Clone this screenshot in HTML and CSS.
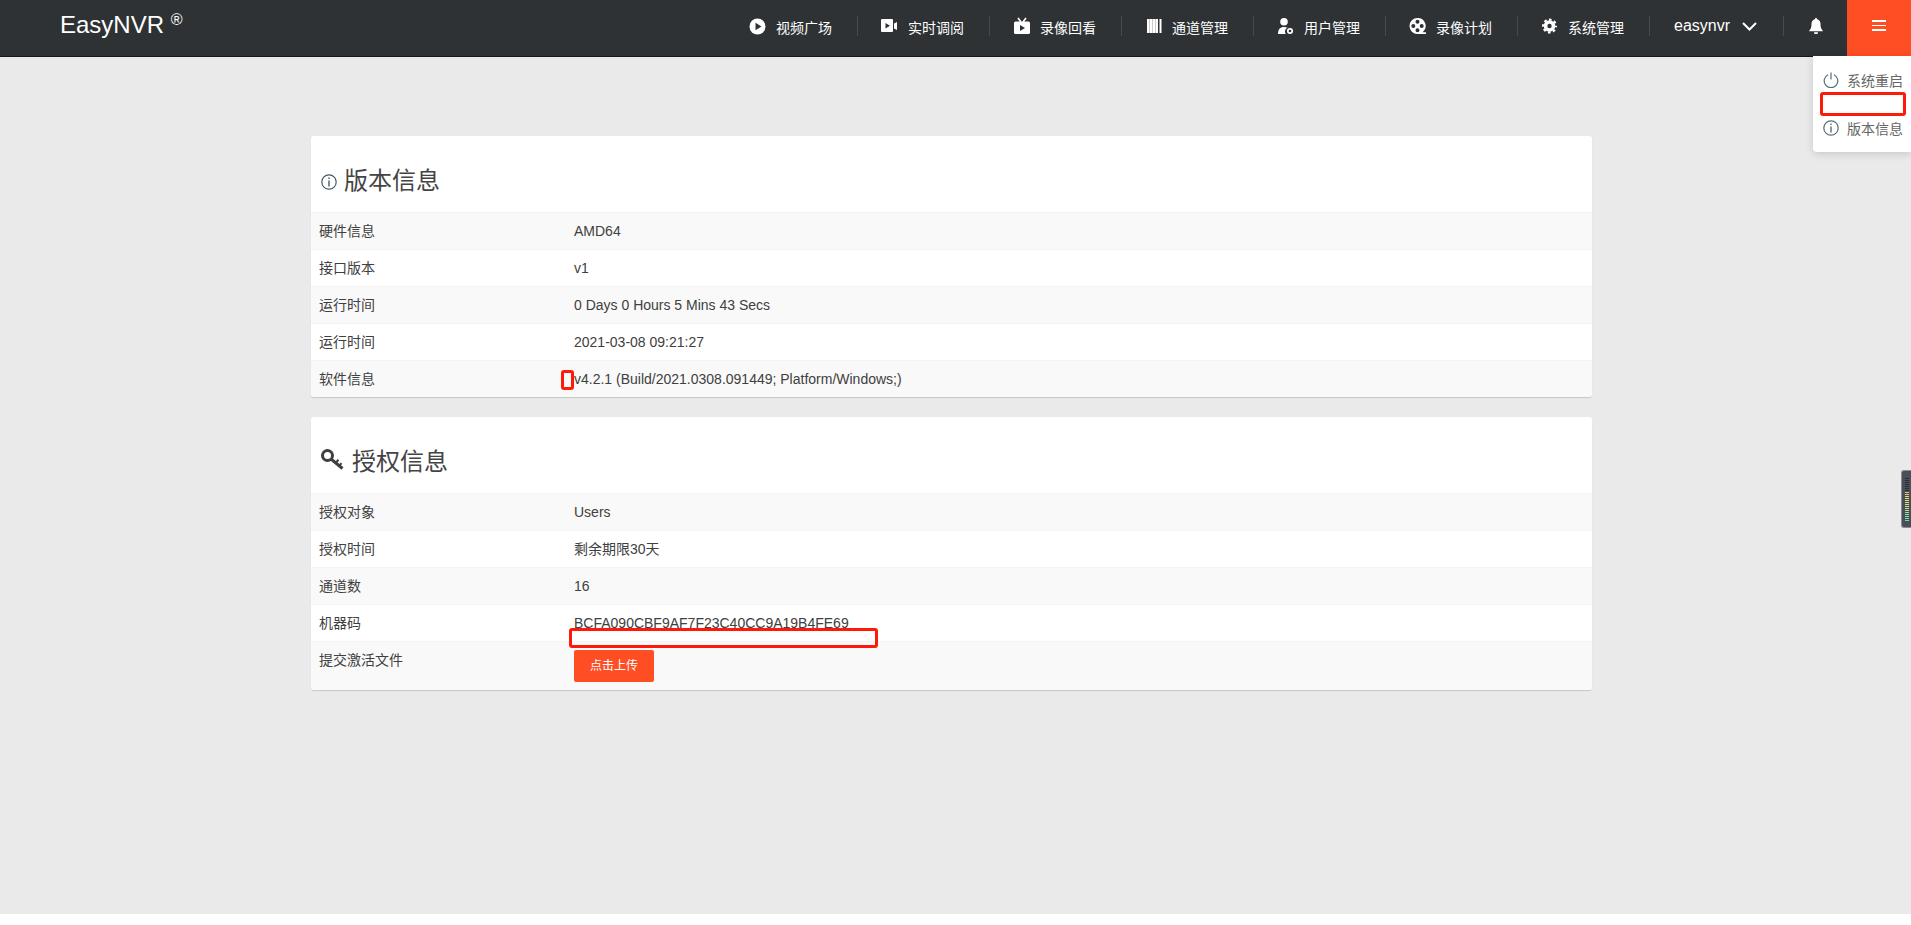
FILE: index.html
```html
<!DOCTYPE html>
<html lang="en">
<head>
    <meta charset="UTF-8">
    <title>EasyNVR</title>
    <link rel="stylesheet" href="styles.css">
</head>
<body>
    <header class="topBar">
        <a class="logo">EasyNVR <sup>®</sup></a>
        <ul class="navList">
            <li>
                <svg class="navIcon" viewBox="0 0 18 18"><circle cx="8.500" cy="9.500" r="8" fill="#fff"/><path d="M6.500 5.800v7.400l6-3.700z" fill="#2e3235"/></svg>
                <span>视频广场</span>
            </li>
            <li>
                <svg class="navIcon" viewBox="0 0 18 18"><rect x="0" y="2" width="12" height="13" rx="1" fill="#fff"/><path d="M4.500 6v5.400l4.500-2.700z" fill="#2e3235"/><path d="M13 6.500l3-1.500v8l-3-1.500z" fill="#fff"/></svg>
                <span>实时调阅</span>
            </li>
            <li>
                <svg class="navIcon" viewBox="0 0 18 18"><path d="M5 1l3 4M13 1l-3 4" stroke="#fff" stroke-width="1.600" fill="none"/><rect x="1" y="4.500" width="16" height="12.500" rx="1.500" fill="#fff"/><path d="M7 8v6l5-3z" fill="#2e3235"/></svg>
                <span>录像回看</span>
            </li>
            <li>
                <svg class="navIcon" viewBox="0 0 18 18"><path d="M2 2h11v14H2zM14.500 2h2v14h-2z" fill="#fff"/><path d="M4.500 2v14M7.500 2v14M10.500 2v14" stroke="#b9b4ae" stroke-width=".7"/></svg>
                <span>通道管理</span>
            </li>
            <li>
                <svg class="navIcon" viewBox="0 0 18 18"><circle cx="7" cy="4.800" r="3.800" fill="#fff"/><path d="M1 17c0-4.800 2-7 6-7 1.400 0 2.600.3 3.500.8A4 4 0 0 0 8.800 17z" fill="#fff"/><circle cx="13" cy="14" r="2.200" fill="none" stroke="#fff" stroke-width="1.700"/></svg>
                <span>用户管理</span>
            </li>
            <li>
                <svg class="navIcon" viewBox="0 0 18 18"><path fill-rule="evenodd" d="M8.500 1a8 8 0 1 0 0 16H17v-1.800h-3.300A8 8 0 0 0 8.500 1zm0 1.800a2 2 0 1 1 0 4 2 2 0 0 1 0-4zM4.300 7a2 2 0 1 1 0 4 2 2 0 0 1 0-4zm8.400 0a2 2 0 1 1 0 4 2 2 0 0 1 0-4zm-4.200 4.200a2 2 0 1 1 0 4 2 2 0 0 1 0-4z" fill="#fff"/></svg>
                <span>录像计划</span>
            </li>
            <li>
                <svg class="navIcon" viewBox="0 0 18 18"><circle cx="8.500" cy="9" r="6.400" fill="none" stroke="#fff" stroke-width="2.200" stroke-dasharray="2.600 2.430" stroke-dashoffset="1.300"/><circle cx="8.500" cy="9" r="4" fill="none" stroke="#fff" stroke-width="3.600"/></svg>
                <span>系统管理</span>
            </li>
            <li class="userItem">
                <span>easynvr</span>
                <svg class="chevron" viewBox="0 0 15 9"><path d="M1 1l6.500 6.500L14 1" fill="none" stroke="#fff" stroke-width="2"/></svg>
            </li>
            <li class="bellItem">
                <svg class="bell" viewBox="0 0 14 16"><path d="M7 0a1.200 1.200 0 0 1 1.200 1.300C10.500 1.900 11.500 3.800 11.500 6c0 3.500.7 5 2.200 6.500v.8H.3v-.8C1.800 11 2.500 9.500 2.500 6c0-2.200 1-4.100 3.300-4.700A1.200 1.200 0 0 1 7 0zM5 14.200h4a2 2 0 0 1-4 0z" fill="#fff"/></svg>
            </li>
        </ul>
        <a class="menuBtn"><i></i><i></i><i></i></a>
    </header>

    <div class="sideMenu">
        <div class="sideItem">
            <svg class="sideIcon" viewBox="0 0 16 16"><path d="M5 2.800a6.800 6.800 0 1 0 6 0M8 .5v7" fill="none" stroke="#5b6b7b" stroke-width="1.200"/></svg>
            <span>系统重启</span>
        </div>
        <div class="sideItem"></div>
        <div class="sideItem">
            <svg class="sideIcon" viewBox="0 0 16 16"><circle cx="8" cy="8" r="7.200" fill="none" stroke="#5b6b7b" stroke-width="1.200"/><path d="M7.300 3.500h1.400v1.500H7.300zM7.300 6.500h1.400v6H7.300z" fill="#5b6b7b"/></svg>
            <span>版本信息</span>
        </div>
    </div>

    <main class="mainBox">
        <section class="card">
            <h3 class="cardTitle">
                <svg class="infoIcon" viewBox="0 0 16 16"><circle cx="8" cy="8" r="7.200" fill="none" stroke="#45566a" stroke-width="1.200"/><path d="M7.300 3.500h1.400v1.500H7.300zM7.300 6.500h1.400v6H7.300z" fill="#45566a"/></svg>
                版本信息
            </h3>
            <table class="infoTable">
                <tr><td>硬件信息</td><td>AMD64</td></tr>
                <tr><td>接口版本</td><td>v1</td></tr>
                <tr><td>运行时间</td><td>0 Days 0 Hours 5 Mins 43 Secs</td></tr>
                <tr><td>运行时间</td><td>2021-03-08 09:21:27</td></tr>
                <tr><td>软件信息</td><td>v4.2.1 (Build/2021.0308.091449; Platform/Windows;)</td></tr>
            </table>
        </section>
        <section class="card">
            <h3 class="cardTitle">
                <svg class="keyIcon" viewBox="0 0 23 21"><circle cx="6.500" cy="6.500" r="5" fill="none" stroke="#3f3f3f" stroke-width="3"/><path d="M10 10l11.500 9.500" fill="none" stroke="#3f3f3f" stroke-width="3"/><path d="M14.500 14l3-3.200M18 17l2.500-2.800" fill="none" stroke="#3f3f3f" stroke-width="2"/></svg>
                授权信息
            </h3>
            <table class="infoTable">
                <tr><td>授权对象</td><td>Users</td></tr>
                <tr><td>授权时间</td><td>剩余期限30天</td></tr>
                <tr><td>通道数</td><td>16</td></tr>
                <tr><td>机器码</td><td>BCFA090CBF9AF7F23C40CC9A19B4FE69</td></tr>
                <tr><td>提交激活文件</td><td><a class="uploadBtn">点击上传</a></td></tr>
            </table>
        </section>
    </main>

    <div class="meter"><i></i></div>

    <!-- red marks drawn over the screenshot -->
    <span class="mark markMenu"></span>
    <span class="mark markVer"></span>
    <span class="mark markCode"></span>
</body>
</html>
```

FILE: styles.css
```css
* {
    padding: 0;
    margin: 0;
    list-style: none;
    box-sizing: border-box;
}

body {
    font-family: "Liberation Sans", "Noto Sans CJK SC", sans-serif;
    font-size: 14px;
    color: #404040;
    background-color: #fff;
}

.topBar {
    display: flex;
    align-items: flex-start;
    height: 57px;
    padding-left: 60px;
    background-color: #2e3235;
    border-bottom: 1px solid #14171c;
    color: #fff;
}

.logo {
    font-size: 24px;
    line-height: 50px;
    white-space: pre;
}

.logo sup {
    font-size: 16px;
    line-height: 0;
    vertical-align: 8px;
}

.navList {
    display: flex;
    align-items: center;
    margin-left: auto;
    height: 52px;
}

.navList li {
    display: flex;
    align-items: center;
    gap: 9px;
    width: 132px;
    height: 20px;
    padding-left: 23px;
    border-right: 1px solid #464a4d;
    white-space: nowrap;
}

.navList li span {
    padding-top: 2px;
}

.navList .userItem {
    width: 134px;
    padding-left: 24px;
    gap: 12px;
    font-size: 16px;
}

.navList .userItem span {
    padding-top: 0;
}

.navList .bellItem {
    width: 63px;
    padding-left: 25px;
    border-right: 0;
}

.navIcon {
    width: 18px;
    height: 18px;
    flex: none;
}

.chevron {
    width: 15px;
    height: 9px;
    margin-top: 1px;
}

.bell {
    width: 14px;
    height: 16px;
}

.menuBtn {
    display: flex;
    flex-direction: column;
    justify-content: center;
    align-items: center;
    gap: 3px;
    width: 64px;
    height: 56px;
    padding-bottom: 5px;
    background-color: #ff4e23;
}

.menuBtn i {
    width: 14px;
    height: 1.500px;
    background-color: #fff;
}

.sideMenu {
    position: absolute;
    top: 56px;
    right: 0;
    width: 98px;
    height: 96px;
    padding-top: 12px;
    background-color: #fff;
    border-radius: 0 0 0 4px;
    box-shadow: 0 2px 8px rgba(0, 0, 0, .15);
    color: #666;
}

.sideItem {
    display: flex;
    align-items: center;
    gap: 8px;
    height: 24px;
    padding-left: 10px;
    white-space: nowrap;
}

.sideIcon {
    width: 16px;
    height: 16px;
    flex: none;
}

.mainBox {
    height: 857px;
    padding: 79px 0 0 311px;
    background-color: #eaeaea;
}

.card {
    width: 1281px;
    margin-bottom: 20px;
    background-color: #fff;
    border-radius: 3px;
    box-shadow: 0 1px 1px rgba(0, 0, 0, .15);
    overflow: hidden;
}

.cardTitle {
    display: flex;
    align-items: center;
    height: 76px;
    padding: 12px 0 0 10px;
    font-size: 24px;
    font-weight: 400;
    color: #444;
}

.cardTitle {
    padding-top: 8px;
}

.infoIcon {
    width: 16px;
    height: 16px;
    margin-top: 8px;
    margin-right: 7px;
}

.keyIcon {
    width: 23px;
    height: 21px;
    margin-right: 8px;
}

.infoTable {
    width: 100%;
    table-layout: fixed;
    border-collapse: separate;
    border-spacing: 0;
}

.infoTable td {
    padding: 8px;
    height: 37px;
    line-height: 20px;
    border-top: 1px solid #f4f4f4;
    vertical-align: top;
}

.infoTable td:first-child {
    width: 255px;
}

.infoTable tr:nth-child(odd) {
    background-color: #f9f9f9;
}

.uploadBtn {
    display: block;
    width: 80px;
    height: 32px;
    line-height: 32px;
    text-align: center;
    font-size: 12px;
    color: #fff;
    background-color: #ff4e23;
    border-radius: 2px;
}

.meter {
    position: absolute;
    top: 470px;
    right: 0;
    width: 10px;
    height: 58px;
    padding: 7px 2px 6px 3px;
    background-color: #4a4f57;
    border: 1px solid #8a8d92;
    border-right: 0;
    border-radius: 3px 0 0 3px;
}

.meter i {
    display: block;
    height: 100%;
    background:
        repeating-linear-gradient(to bottom, transparent 0 1px, #4a4f57 1px 2px),
        linear-gradient(to bottom, #2c3036 0 30%, #e8b060 30%, #ecdc70 45%, #cfe680 65%, #8fe6a0 82%, #66dcc0 100%);
}

.mark {
    position: absolute;
    border: 3px solid #fe1a0a;
    border-radius: 3px;
}

.markMenu {
    left: 1820px;
    top: 92px;
    width: 86px;
    height: 24px;
}

.markVer {
    left: 561px;
    top: 370px;
    width: 13px;
    height: 20px;
}

.markCode {
    left: 569px;
    top: 628px;
    width: 309px;
    height: 20px;
}
```
